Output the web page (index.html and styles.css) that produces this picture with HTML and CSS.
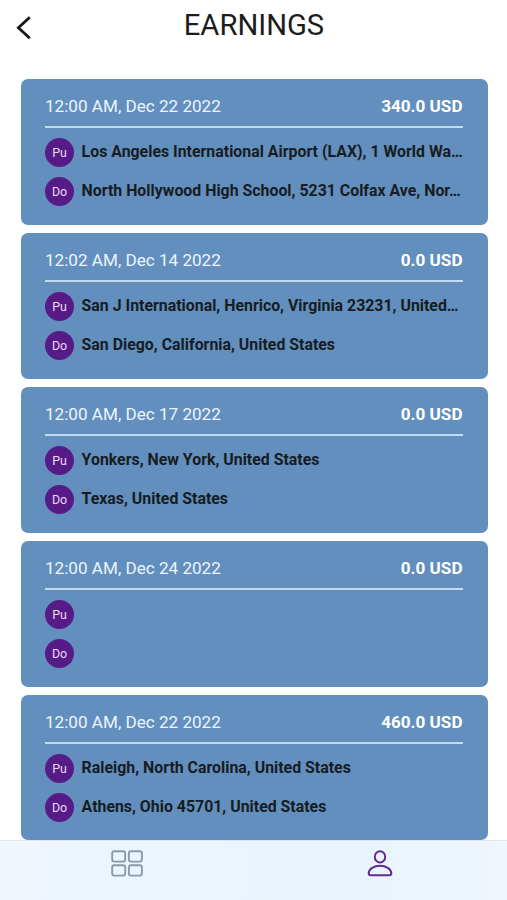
FILE: index.html
```html
<!DOCTYPE html>
<html lang="en">
<head>
<meta charset="utf-8">
<meta name="viewport" content="width=device-width, initial-scale=1">
<title>Earnings</title>
<link rel="stylesheet" href="styles.css">
</head>
<body>
<div class="app">
  <header class="header">
    <svg class="back" width="18" height="26" viewBox="0 0 18 26" fill="none"><path d="M15.8 2.3 L4.4 12.8 L15.8 23.2"/></svg>
    <h1 class="title">EARNINGS</h1>
    <span></span>
  </header>
  <main class="list">
    <article class="card">
      <div class="card-head"><span class="date">12:00 AM, Dec 22 2022</span><span class="amount">340.0 USD</span></div>
      <div class="stop"><span class="badge">Pu</span><span class="place">Los Angeles International Airport (LAX), 1 World Wa…</span></div>
      <div class="stop"><span class="badge">Do</span><span class="place">North Hollywood High School, 5231 Colfax Ave, Nor…</span></div>
    </article>
    <article class="card">
      <div class="card-head"><span class="date">12:02 AM, Dec 14 2022</span><span class="amount">0.0 USD</span></div>
      <div class="stop"><span class="badge">Pu</span><span class="place">San J International, Henrico, Virginia 23231, United…</span></div>
      <div class="stop"><span class="badge">Do</span><span class="place">San Diego, California, United States</span></div>
    </article>
    <article class="card">
      <div class="card-head"><span class="date">12:00 AM, Dec 17 2022</span><span class="amount">0.0 USD</span></div>
      <div class="stop"><span class="badge">Pu</span><span class="place">Yonkers, New York, United States</span></div>
      <div class="stop"><span class="badge">Do</span><span class="place">Texas, United States</span></div>
    </article>
    <article class="card">
      <div class="card-head"><span class="date">12:00 AM, Dec 24 2022</span><span class="amount">0.0 USD</span></div>
      <div class="stop"><span class="badge">Pu</span><span class="place"></span></div>
      <div class="stop"><span class="badge">Do</span><span class="place"></span></div>
    </article>
    <article class="card">
      <div class="card-head"><span class="date">12:00 AM, Dec 22 2022</span><span class="amount">460.0 USD</span></div>
      <div class="stop"><span class="badge">Pu</span><span class="place">Raleigh, North Carolina, United States</span></div>
      <div class="stop"><span class="badge">Do</span><span class="place">Athens, Ohio 45701, United States</span></div>
    </article>
  </main>
  <nav class="tabs">
    <div class="tab">
      <svg class="icon grid-icon" width="34" height="28" viewBox="0 0 34 28" fill="none">
        <rect x="2.2" y="1.2" width="13" height="10.4" rx="2"/><rect x="18.9" y="1.2" width="13" height="10.4" rx="2"/>
        <rect x="2.2" y="15.2" width="13" height="10.4" rx="2"/><rect x="18.9" y="15.2" width="13" height="10.4" rx="2"/>
      </svg>
    </div>
    <div class="tab">
      <svg class="icon person-icon" width="28" height="28" viewBox="0 0 28 28" fill="none">
        <ellipse cx="14" cy="6.9" rx="5.2" ry="5.7"/>
        <path d="M2.7 23.3 C2.9 19 8 15.8 14 15.8 S25.1 19 25.3 23.3 Q25.3 25.2 23.4 25.2 H4.6 Q2.7 25.2 2.7 23.3 Z"/>
      </svg>
    </div>
  </nav>
</div>
</body>
</html>
```

FILE: styles.css
```css
* { box-sizing: border-box; }
body { margin: 0; background: #fff; font-family: Roboto, sans-serif; }
.app { height: 900px; display: flex; flex-direction: column; overflow: hidden; }
.header {
  flex: none;
  height: 79.3px;
  padding: 8px 14px 0;
  display: grid;
  grid-template-columns: 40px 1fr 39px;
  align-items: start;
}
.back { margin-top: 7px; stroke: #171717; stroke-width: 2.8; }
.title {
  margin: 0;
  text-align: center;
  font-size: 29.2px;
  line-height: 34px;
  font-weight: 400;
  color: #1c1c1c;
}
.list {
  flex: 1;
  min-height: 0;
  padding: 0 19.5px 0 20.5px;
  display: flex;
  flex-direction: column;
  gap: 8px;
  overflow: hidden;
}
.card {
  flex: none;
  height: 146px;
  padding: 10.2px 24.5px 0;
  border-radius: 7px;
  background: #628fbe;
}
.card:last-child { height: 145px; }
.card-head {
  height: 38.5px;
  padding-bottom: 3px;
  border-bottom: 2px solid #c3daf1;
  display: flex;
  align-items: center;
  justify-content: space-between;
  color: #edf5ff;
  font-size: 17.1px;
}
.amount { font-weight: 700; color: #fff; padding-right: 0.5px; }
.stop { height: 29px; margin-top: 10px; display: flex; align-items: center; gap: 7.6px; }
.badge {
  flex: none;
  width: 29px;
  height: 29px;
  border-radius: 50%;
  background: #571b87;
  color: #eed7fb;
  font-size: 12.4px;
  line-height: 30px;
  text-align: center;
}
.place {
  min-width: 0;
  white-space: nowrap;
  font-size: 15.88px;
  line-height: 20px;
  font-weight: 700;
  color: #171c22;
}
.tabs {
  flex: none;
  height: 60px;
  border-top: 1px solid #dfe5ea;
  background: linear-gradient(90deg, #f1f6fc 0%, #eaf5fe 22%, #e9f4fe 70%, #eff6fc 100%);
  display: grid;
  grid-template-columns: 1fr 1fr;
}
.tab { display: flex; justify-content: center; padding-top: 9px; }
.grid-icon { stroke: #8c9aa5; stroke-width: 1.9; }
.person-icon { stroke: #632a91; stroke-width: 2; }
```
